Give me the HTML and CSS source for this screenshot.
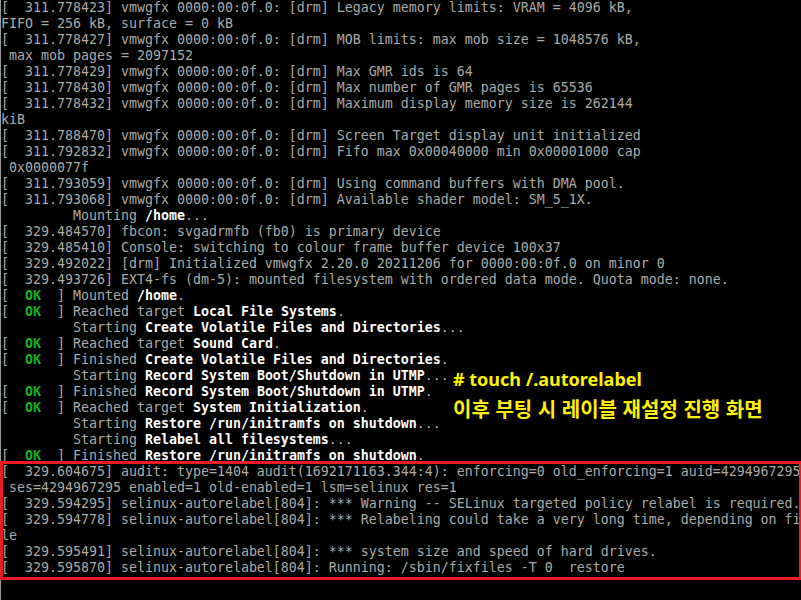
FILE: index.html
```html
<!DOCTYPE html>
<html lang="ko">
<head>
    <meta charset="UTF-8">
    <meta name="viewport" content="width=device-width, initial-scale=1.0">
    <title>autorelabel boot</title>
    <link rel="stylesheet" href="styles.css">
</head>
<body>
    <div class="screen">
        <div class="console">
            <div class="line">[  311.778423] vmwgfx 0000:00:0f.0: [drm] Legacy memory limits: VRAM = 4096 kB,</div>
            <div class="line">FIFO = 256 kB, surface = 0 kB</div>
            <div class="line">[  311.778427] vmwgfx 0000:00:0f.0: [drm] MOB limits: max mob size = 1048576 kB,</div>
            <div class="line"> max mob pages = 2097152</div>
            <div class="line">[  311.778429] vmwgfx 0000:00:0f.0: [drm] Max GMR ids is 64</div>
            <div class="line">[  311.778430] vmwgfx 0000:00:0f.0: [drm] Max number of GMR pages is 65536</div>
            <div class="line">[  311.778432] vmwgfx 0000:00:0f.0: [drm] Maximum display memory size is 262144</div>
            <div class="line">kiB</div>
            <div class="line">[  311.788470] vmwgfx 0000:00:0f.0: [drm] Screen Target display unit initialized</div>
            <div class="line">[  311.792832] vmwgfx 0000:00:0f.0: [drm] Fifo max 0x00040000 min 0x00001000 cap</div>
            <div class="line"> 0x0000077f</div>
            <div class="line">[  311.793059] vmwgfx 0000:00:0f.0: [drm] Using command buffers with DMA pool.</div>
            <div class="line">[  311.793068] vmwgfx 0000:00:0f.0: [drm] Available shader model: SM_5_1X.</div>
            <div class="line">         Mounting <span class="hi">/home</span>...</div>
            <div class="line">[  329.484570] fbcon: svgadrmfb (fb0) is primary device</div>
            <div class="line">[  329.485410] Console: switching to colour frame buffer device 100x37</div>
            <div class="line">[  329.492022] [drm] Initialized vmwgfx 2.20.0 20211206 for 0000:00:0f.0 on minor 0</div>
            <div class="line">[  329.493726] EXT4-fs (dm-5): mounted filesystem with ordered data mode. Quota mode: none.</div>
            <div class="line">[  <span class="ok">OK</span>  ] Mounted <span class="hi">/home</span>.</div>
            <div class="line">[  <span class="ok">OK</span>  ] Reached target <span class="hi">Local File Systems</span>.</div>
            <div class="line">         Starting <span class="hi">Create Volatile Files and Directories</span>...</div>
            <div class="line">[  <span class="ok">OK</span>  ] Reached target <span class="hi">Sound Card</span>.</div>
            <div class="line">[  <span class="ok">OK</span>  ] Finished <span class="hi">Create Volatile Files and Directories</span>.</div>
            <div class="line">         Starting <span class="hi">Record System Boot/Shutdown in UTMP</span>...</div>
            <div class="line">[  <span class="ok">OK</span>  ] Finished <span class="hi">Record System Boot/Shutdown in UTMP</span>.</div>
            <div class="line">[  <span class="ok">OK</span>  ] Reached target <span class="hi">System Initialization</span>.</div>
            <div class="line">         Starting <span class="hi">Restore /run/initramfs on shutdown</span>...</div>
            <div class="line">         Starting <span class="hi">Relabel all filesystems</span>...</div>
            <div class="line">[  <span class="ok">OK</span>  ] Finished <span class="hi">Restore /run/initramfs on shutdown</span>.</div>
            <div class="line">[  329.604675] audit: type=1404 audit(1692171163.344:4): enforcing=0 old_enforcing=1 auid=4294967295</div>
            <div class="line"> ses=4294967295 enabled=1 old-enabled=1 lsm=selinux res=1</div>
            <div class="line">[  329.594295] selinux-autorelabel[804]: *** Warning -- SELinux targeted policy relabel is required.</div>
            <div class="line">[  329.594778] selinux-autorelabel[804]: *** Relabeling could take a very long time, depending on fi</div>
            <div class="line">le</div>
            <div class="line">[  329.595491] selinux-autorelabel[804]: *** system size and speed of hard drives.</div>
            <div class="line">[  329.595870] selinux-autorelabel[804]: Running: /sbin/fixfiles -T 0  restore</div>
        </div>

        <!-- annotation drawn over the console -->
        <div class="note">
            <div class="note-cmd"># touch /.autorelabel</div>
            <div class="note-desc">이후 부팅 시 레이블 재설정 진행 화면</div>
        </div>
        <div class="highlight"></div>
    </div>
</body>
</html>
```

FILE: styles.css
```css
* {
    margin: 0;
    padding: 0;
    box-sizing: border-box;
}

body {
    background: #000;
    width: 801px;
    height: 600px;
    overflow: hidden;
}

.screen {
    position: relative;
    width: 801px;
    height: 600px;
    background: #000;
    border-left: 1px solid #9a9a9a;
}

.console {
    font-family: "DejaVu Sans Mono", "Liberation Mono", monospace;
    font-size: 13.29px;
    color: #aaaaaa;
}

.line {
    height: 16px;
    line-height: 16px;
    white-space: pre;
    overflow: hidden;
    width: 800px;
}

.hi {
    color: #ffffff;
    font-weight: bold;
}

.ok {
    color: #14b414;
    font-weight: bold;
}

.note {
    position: absolute;
    left: 452px;
    top: 366px;
    color: #fff200;
    font-family: "Noto Sans CJK KR", "Noto Sans", sans-serif;
    font-weight: bold;
}

.note-cmd {
    font-family: "Noto Sans", "Noto Sans CJK KR", sans-serif;
    font-size: 18px;
    line-height: 26px;
}

.note-desc {
    font-size: 20px;
    line-height: 28px;
    margin-top: 3px;
}

.highlight {
    position: absolute;
    left: -1px;
    top: 461px;
    width: 802px;
    height: 119px;
    border: 3px solid #ed1c24;
}
```
